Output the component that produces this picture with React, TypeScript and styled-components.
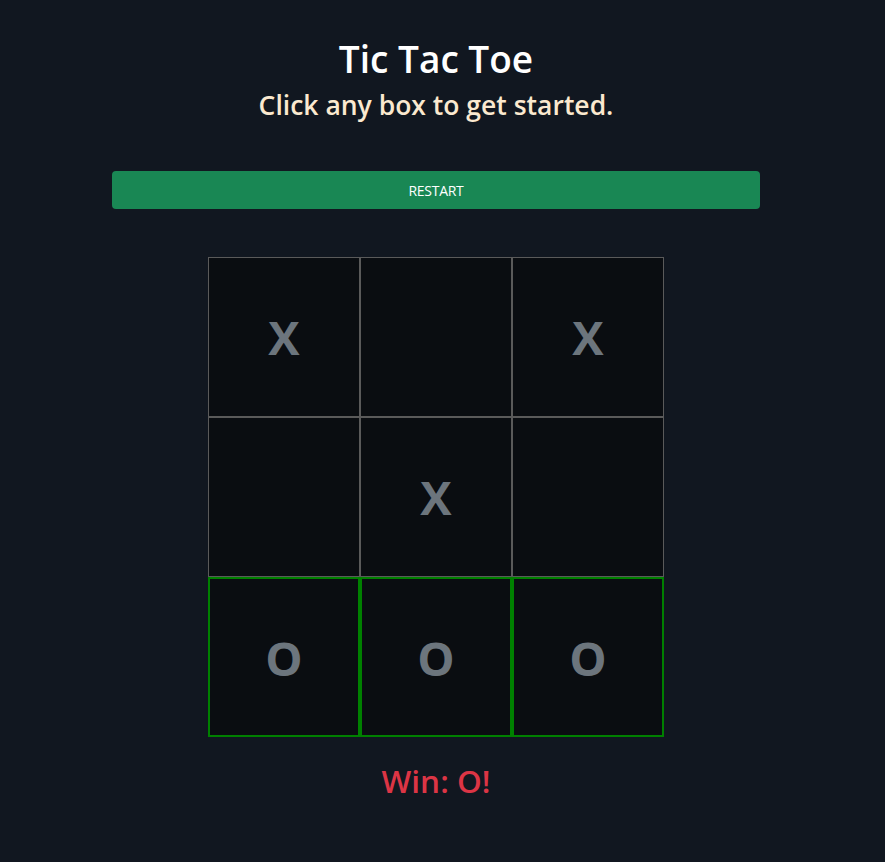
import React from "react";
import styled, { createGlobalStyle } from "styled-components";

const Global = createGlobalStyle`
  html, body { margin: 0; padding: 0; background: #111720; }
  body { font-family: "Open Sans", "Noto Sans", "Liberation Sans", sans-serif; }
`;

const Page = styled.div`
  width: 872px;
  min-height: 862px;
  background: #111720;
  display: flex;
  flex-direction: column;
  align-items: center;
  padding-top: 35px;
  box-sizing: border-box;
`;

const Title = styled.h1`
  margin: 0;
  font-size: 37px;
  font-weight: 600;
  color: #ffffff;
  line-height: 48px;
`;

const Subtitle = styled.h3`
  margin: 0;
  font-size: 26.5px;
  font-weight: 600;
  color: #fbe9cf;
  line-height: 44px;
`;

const RestartButton = styled.button`
  margin-top: 44px;
  width: 648px;
  height: 38px;
  border: none;
  border-radius: 4px;
  background: #198754;
  color: #ffffff;
  font-family: "Open Sans", "Noto Sans", sans-serif;
  font-size: 14px;
  letter-spacing: -0.3px;
  cursor: pointer;
`;

const Board = styled.div`
  margin-top: 48px;
  display: grid;
  grid-template-columns: repeat(3, 152px);
  grid-template-rows: repeat(3, 160px);
`;

const Cell = styled.div<{ $win?: boolean }>`
  box-sizing: border-box;
  background: #0a0d11;
  border: ${(p) => (p.$win ? "2px solid #008000" : "1px solid #5a5a5a")};
  display: flex;
  align-items: center;
  justify-content: center;
  color: #6c757d;
  font-size: 47px;
  font-weight: 700;
  padding-top: ${(p) => (p.$win ? "2px" : "0")};
`;

const Result = styled.div`
  margin-top: 22px;
  font-size: 31.5px;
  font-weight: 600;
  color: #dc3545;
`;

const cells = ["X", "", "X", "", "X", "", "O", "O", "O"];
const winning = [6, 7, 8];

export default function App() {
  return (
    <Page>
      <Global />
      <Title>Tic Tac Toe</Title>
      <Subtitle>Click any box to get started.</Subtitle>
      <RestartButton>RESTART</RestartButton>
      <Board>
        {cells.map((c, i) => (
          <Cell key={i} $win={winning.includes(i)}>
            {c}
          </Cell>
        ))}
      </Board>
      <Result>Win: O!</Result>
    </Page>
  );
}
